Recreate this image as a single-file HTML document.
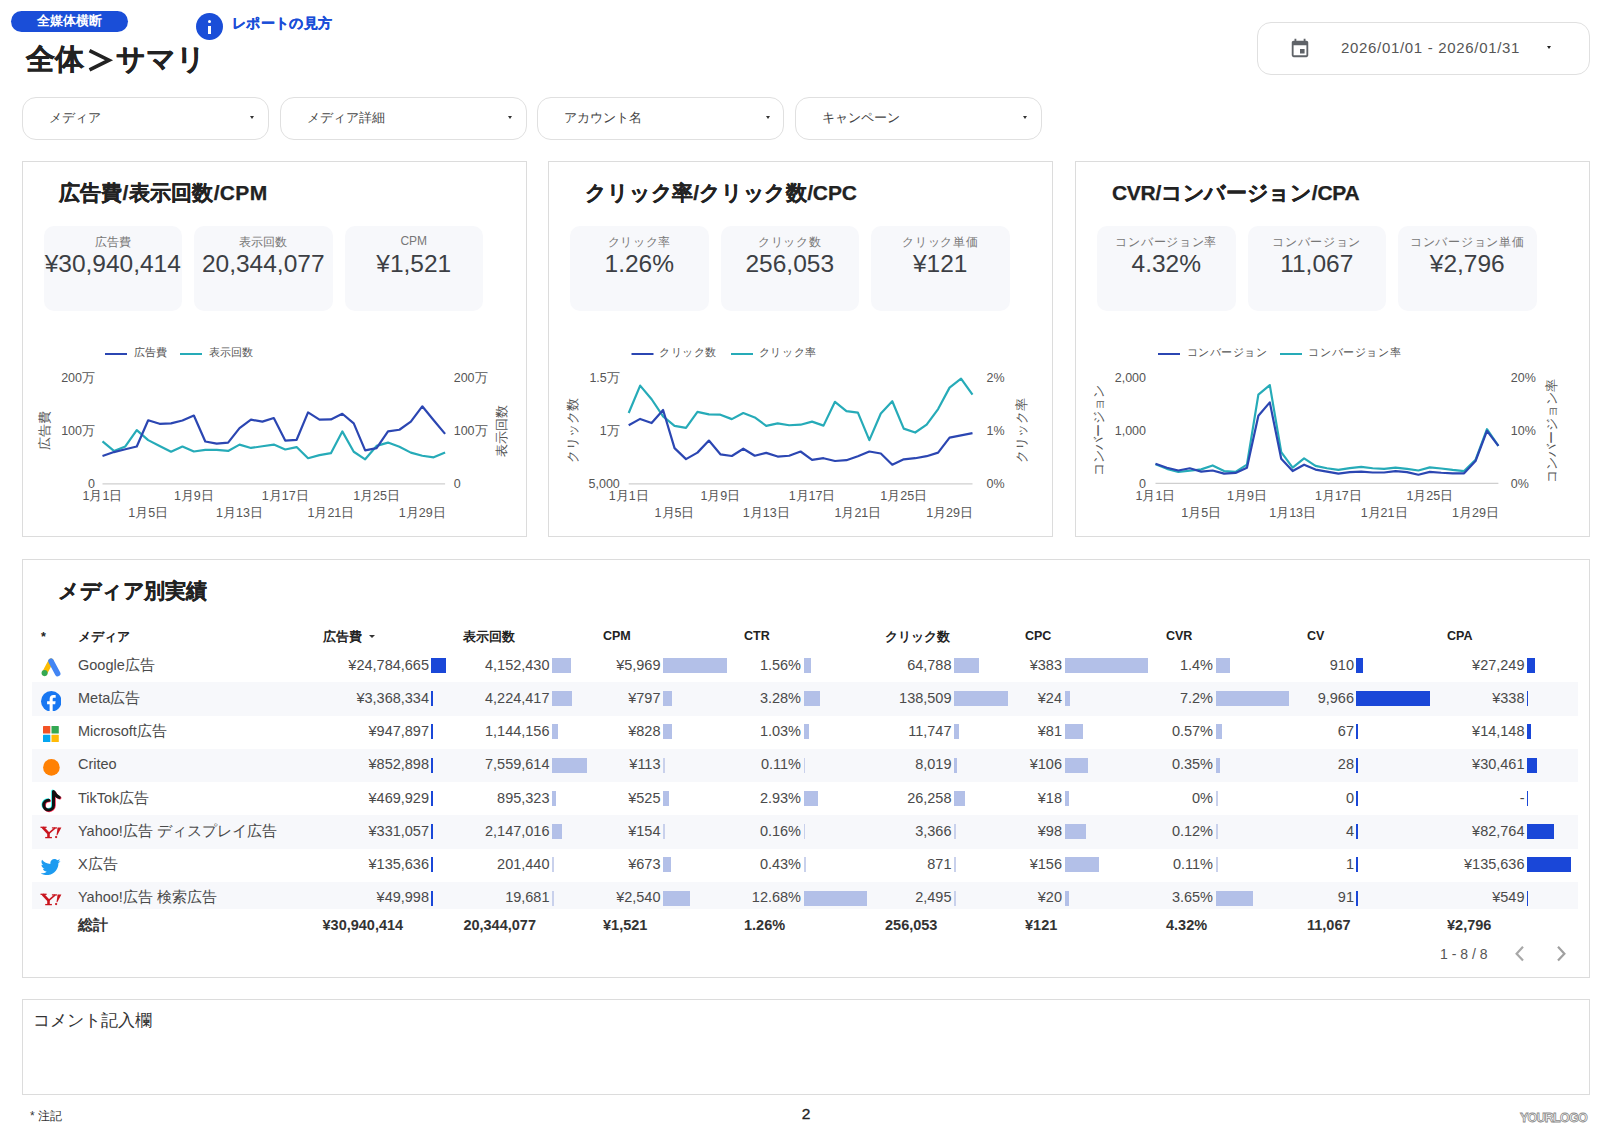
<!DOCTYPE html><html><head><meta charset="utf-8"><style>
*{box-sizing:border-box;margin:0;padding:0}
html,body{width:1612px;height:1139px;overflow:hidden;background:#fff;font-family:"Liberation Sans", sans-serif;color:#333}
.a{position:absolute;white-space:nowrap}
.pill{position:absolute;border:1.4px solid #e0e0e0;border-radius:14px;background:#fff}
.panel{position:absolute;border:1px solid #dcdcdc;background:#fff}
.card{position:absolute;background:#f7f8fb;border-radius:10px}
.klab{position:absolute;left:0;right:0;text-align:center;font-size:12px;color:#777;top:8px}
.kval{position:absolute;left:0;right:0;text-align:center;font-size:24.5px;color:#3c3f44;top:24px}
.caret{position:absolute;width:0;height:0;border-left:2.8px solid transparent;border-right:2.8px solid transparent;border-top:3.4px solid #333}
.ax{font-size:12.5px;fill:#555}
.lg{font-size:11.3px;fill:#555}
.th{font-size:12.5px;font-weight:bold;color:#222}
.td{font-size:14.5px;color:#4a4a4a;line-height:18px}
.tt{font-size:14.5px;font-weight:bold;color:#333;line-height:18px}
.ptitle{position:absolute;font-size:21px;font-weight:bold;color:#222;-webkit-text-stroke:0.25px #222}
</style></head><body>

<div class="a" style="left:11px;top:11px;width:117px;height:21px;border-radius:11px;background:#1a4ed8;color:#fff;font-size:12.5px;font-weight:bold;text-align:center;line-height:21px;">全媒体横断</div>
<div class="a" style="left:196px;top:13px;width:27px;height:27px;border-radius:50%;background:#1a4ed8"></div>
<div class="a" style="left:207.7px;top:19.8px;width:3.6px;height:3.6px;border-radius:50%;background:#fff"></div>
<div class="a" style="left:207.9px;top:25.8px;width:3.2px;height:7.8px;background:#fff"></div>
<div class="a" style="left:232px;top:15px;font-size:14px;font-weight:bold;color:#1a4ed8;letter-spacing:0.35px;-webkit-text-stroke:0.3px #1a4ed8">レポートの見方</div>
<div class="a" style="left:26px;top:40px;font-size:29px;font-weight:bold;color:#222;-webkit-text-stroke:0.3px #222">全体</div>
<svg class="a" style="left:86px;top:47px" width="28" height="28" viewBox="0 0 28 28"><path d="M3.5 3.6 L23 13.2 L3.5 22.8" fill="none" stroke="#222" stroke-width="3.6" stroke-linejoin="miter"/></svg>
<div class="a" style="left:116px;top:40px;font-size:29px;font-weight:bold;color:#222;-webkit-text-stroke:0.3px #222">サマリ</div>
<div class="pill" style="left:1257px;top:22px;width:333px;height:53px;border-radius:14px"></div>
<svg class="a" style="left:1289px;top:37px" width="22" height="22" viewBox="0 0 24 24"><path fill="#5f6368" d="M19 4h-1V2h-2v2H8V2H6v2H5c-1.11 0-1.99.9-1.99 2L3 20a2 2 0 0 0 2 2h14c1.1 0 2-.9 2-2V6c0-1.1-.9-2-2-2zm0 16H5V9h14v11zm-2-7h-5v5h5v-5z"/></svg>
<div class="a" style="left:1341px;top:38.5px;font-size:15px;color:#555;letter-spacing:0.68px">2026/01/01 - 2026/01/31</div>
<div class="caret" style="left:1547px;top:46px;border-top-color:#222"></div>
<div class="pill" style="left:21.5px;top:97px;width:247px;height:43px"></div>
<div class="a" style="left:48.5px;top:109px;font-size:13px;color:#444">メディア</div>
<div class="caret" style="left:249.7px;top:116px"></div>
<div class="pill" style="left:279.6px;top:97px;width:247px;height:43px"></div>
<div class="a" style="left:306.6px;top:109px;font-size:13px;color:#444">メディア詳細</div>
<div class="caret" style="left:507.8px;top:116px"></div>
<div class="pill" style="left:537.4px;top:97px;width:247px;height:43px"></div>
<div class="a" style="left:564.4px;top:109px;font-size:13px;color:#444">アカウント名</div>
<div class="caret" style="left:765.5999999999999px;top:116px"></div>
<div class="pill" style="left:795.1px;top:97px;width:247px;height:43px"></div>
<div class="a" style="left:822.1px;top:109px;font-size:13px;color:#444">キャンペーン</div>
<div class="caret" style="left:1023.3px;top:116px"></div>
<div class="panel" style="left:21.5px;top:161px;width:505px;height:376px"></div>
<div class="ptitle" style="left:58.5px;top:179px;letter-spacing:0.3px">広告費/表示回数/CPM</div>
<div class="card" style="left:43.5px;top:225.5px;width:138.5px;height:85.5px"><div class="klab" style="letter-spacing:0px">広告費</div><div class="kval">¥30,940,414</div></div>
<div class="card" style="left:194.0px;top:225.5px;width:138.5px;height:85.5px"><div class="klab" style="letter-spacing:0px">表示回数</div><div class="kval">20,344,077</div></div>
<div class="card" style="left:344.5px;top:225.5px;width:138.5px;height:85.5px"><div class="klab" style="letter-spacing:0px">CPM</div><div class="kval">¥1,521</div></div>
<div class="panel" style="left:548px;top:161px;width:505px;height:376px"></div>
<div class="ptitle" style="left:585px;top:179px;letter-spacing:-0.15px">クリック率/クリック数/CPC</div>
<div class="card" style="left:570.0px;top:225.5px;width:138.5px;height:85.5px"><div class="klab" style="letter-spacing:0.7px">クリック率</div><div class="kval">1.26%</div></div>
<div class="card" style="left:720.5px;top:225.5px;width:138.5px;height:85.5px"><div class="klab" style="letter-spacing:0.7px">クリック数</div><div class="kval">256,053</div></div>
<div class="card" style="left:871.0px;top:225.5px;width:138.5px;height:85.5px"><div class="klab" style="letter-spacing:0.7px">クリック単価</div><div class="kval">¥121</div></div>
<div class="panel" style="left:1075px;top:161px;width:515px;height:376px"></div>
<div class="ptitle" style="left:1112px;top:179px;letter-spacing:-0.3px">CVR/コンバージョン/CPA</div>
<div class="card" style="left:1097.0px;top:225.5px;width:138.5px;height:85.5px"><div class="klab" style="letter-spacing:0.7px">コンバージョン率</div><div class="kval">4.32%</div></div>
<div class="card" style="left:1247.5px;top:225.5px;width:138.5px;height:85.5px"><div class="klab" style="letter-spacing:0.7px">コンバージョン</div><div class="kval">11,067</div></div>
<div class="card" style="left:1398.0px;top:225.5px;width:138.5px;height:85.5px"><div class="klab" style="letter-spacing:0.7px">コンバージョン単価</div><div class="kval">¥2,796</div></div>
<div class="panel" style="left:21.5px;top:558.5px;width:1568px;height:419px"></div>
<div class="ptitle" style="left:58px;top:576.5px;letter-spacing:-0.4px">メディア別実績</div>
<div class="panel" style="left:21.5px;top:999px;width:1568px;height:96px"></div>
<div class="a" style="left:33px;top:1010px;font-size:16.5px;color:#333">コメント記入欄</div>
<div class="a" style="left:30px;top:1108px;font-size:12px;color:#333">* 注記</div>
<div class="a" style="left:801.8px;top:1105.3px;font-size:15.5px;color:#222;-webkit-text-stroke:0.3px #222">2</div>
<div class="a" style="left:1520px;top:1111px;font-size:12.5px;font-weight:bold;color:#fff;-webkit-text-stroke:0.8px #8a8a8a;letter-spacing:-0.75px">YOURLOGO</div>
<svg class="a" style="left:0;top:0" width="1612" height="1139"><line x1="102.5" y1="483.9" x2="445.1" y2="483.9" stroke="#cfcfcf" stroke-width="1.3"/>
<polyline points="102.50,441.46 113.92,450.96 125.34,446.49 136.76,430.07 148.18,440.12 159.60,445.93 171.02,451.74 182.44,446.49 193.86,451.51 205.28,449.84 216.70,449.84 228.12,450.96 239.54,444.59 250.96,447.94 262.38,446.27 273.80,444.59 285.22,449.5 296.64,447.05 308.06,458.21 319.48,455.09 330.90,453.19 342.32,431.41 353.74,451.74 365.16,459.33 376.58,445.93 388.00,442.58 399.42,446.82 410.84,452.63 422.26,455.76 433.68,457.32 445.10,452.41" fill="none" stroke="#26abb8" stroke-width="2.2" stroke-linejoin="round"/>
<polyline points="102.50,455.98 113.92,452.07 125.34,449.28 136.76,446.49 148.18,420.25 159.60,423.82 171.02,423.37 182.44,420.47 193.86,415.56 205.28,441.46 216.70,443.7 228.12,442.58 239.54,428.06 250.96,419.69 262.38,421.59 273.80,418.01 285.22,440.57 296.64,439.79 308.06,412.43 319.48,419.69 330.90,419.47 342.32,413.77 353.74,423.37 365.16,450.4 376.58,448.16 388.00,431.41 399.42,429.74 410.84,421.59 422.26,406.29 433.68,420.25 445.10,433.87" fill="none" stroke="#2b46b2" stroke-width="2.2" stroke-linejoin="round"/>
<text x="95" y="381.5" text-anchor="end" class="ax">200万</text>
<text x="95" y="434.5" text-anchor="end" class="ax">100万</text>
<text x="95" y="487.9" text-anchor="end" class="ax">0</text>
<text x="453.7" y="381.5" text-anchor="start" class="ax">200万</text>
<text x="453.7" y="434.5" text-anchor="start" class="ax">100万</text>
<text x="453.7" y="487.9" text-anchor="start" class="ax">0</text>
<text x="0" y="0" text-anchor="middle" class="ax" transform="translate(49.1,430.5) rotate(-90)">広告費</text>
<text x="0" y="0" text-anchor="middle" class="ax" transform="translate(506.4,430.5) rotate(-90)">表示回数</text>
<text x="102.50" y="499.5" text-anchor="middle" class="ax">1月1日</text>
<text x="193.86" y="499.5" text-anchor="middle" class="ax">1月9日</text>
<text x="285.22" y="499.5" text-anchor="middle" class="ax">1月17日</text>
<text x="376.58" y="499.5" text-anchor="middle" class="ax">1月25日</text>
<text x="148.18" y="516.5" text-anchor="middle" class="ax">1月5日</text>
<text x="239.54" y="516.5" text-anchor="middle" class="ax">1月13日</text>
<text x="330.90" y="516.5" text-anchor="middle" class="ax">1月21日</text>
<text x="422.26" y="516.5" text-anchor="middle" class="ax">1月29日</text>
<line x1="105" y1="354" x2="127" y2="354" stroke="#2b46b2" stroke-width="2"/>
<text x="133.5" y="355.8" class="lg" letter-spacing="0">広告費</text>
<line x1="180" y1="354" x2="202" y2="354" stroke="#26abb8" stroke-width="2"/>
<text x="209" y="355.8" class="lg" letter-spacing="0">表示回数</text>
<line x1="628.7" y1="483.9" x2="972.5" y2="483.9" stroke="#cfcfcf" stroke-width="1.3"/>
<polyline points="628.70,412.99 640.16,385.63 651.62,399.26 663.08,416.34 674.54,425.83 686.00,427.84 697.46,411.87 708.92,414.44 720.38,414.67 731.84,419.13 743.30,412.99 754.76,417.46 766.22,425.83 777.68,423.37 789.14,425.27 800.60,424.71 812.06,421.59 823.52,425.61 834.98,401.82 846.44,411.09 857.90,412.66 869.36,440.12 880.82,413.55 892.28,401.27 903.74,428.62 915.20,432.53 926.66,424.71 938.12,409.08 949.58,387.64 961.04,378.71 972.50,394.57" fill="none" stroke="#26abb8" stroke-width="2.2" stroke-linejoin="round"/>
<polyline points="628.70,425.27 640.16,418.91 651.62,423.04 663.08,409.98 674.54,448.16 686.00,459.11 697.46,452.63 708.92,440.57 720.38,454.31 731.84,455.98 743.30,448.72 754.76,455.76 766.22,452.85 777.68,456.54 789.14,455.76 800.60,451.51 812.06,459.89 823.52,458.21 834.98,461.0 846.44,460.22 857.90,456.2 869.36,451.51 880.82,453.52 892.28,464.69 903.74,459.33 915.20,458.21 926.66,456.2 938.12,452.63 949.58,437.56 961.04,435.32 972.50,433.09" fill="none" stroke="#2b46b2" stroke-width="2.2" stroke-linejoin="round"/>
<text x="619.8" y="381.5" text-anchor="end" class="ax">1.5万</text>
<text x="619.8" y="434.5" text-anchor="end" class="ax">1万</text>
<text x="619.8" y="487.9" text-anchor="end" class="ax">5,000</text>
<text x="986.6" y="381.5" text-anchor="start" class="ax">2%</text>
<text x="986.6" y="434.5" text-anchor="start" class="ax">1%</text>
<text x="986.6" y="487.9" text-anchor="start" class="ax">0%</text>
<text x="0" y="0" text-anchor="middle" class="ax" transform="translate(576.9,430.5) rotate(-90)">クリック数</text>
<text x="0" y="0" text-anchor="middle" class="ax" transform="translate(1025.9,430.5) rotate(-90)">クリック率</text>
<text x="628.70" y="499.5" text-anchor="middle" class="ax">1月1日</text>
<text x="720.38" y="499.5" text-anchor="middle" class="ax">1月9日</text>
<text x="812.06" y="499.5" text-anchor="middle" class="ax">1月17日</text>
<text x="903.74" y="499.5" text-anchor="middle" class="ax">1月25日</text>
<text x="674.54" y="516.5" text-anchor="middle" class="ax">1月5日</text>
<text x="766.22" y="516.5" text-anchor="middle" class="ax">1月13日</text>
<text x="857.90" y="516.5" text-anchor="middle" class="ax">1月21日</text>
<text x="949.58" y="516.5" text-anchor="middle" class="ax">1月29日</text>
<line x1="631.5" y1="354" x2="653.5" y2="354" stroke="#2b46b2" stroke-width="2"/>
<text x="659" y="355.8" class="lg" letter-spacing="0.6">クリック数</text>
<line x1="731" y1="354" x2="753" y2="354" stroke="#26abb8" stroke-width="2"/>
<text x="758.8" y="355.8" class="lg" letter-spacing="0.6">クリック率</text>
<line x1="1155.5" y1="483.4" x2="1498.4" y2="483.4" stroke="#cfcfcf" stroke-width="1.3"/>
<polyline points="1155.50,464.35 1166.93,468.82 1178.36,471.84 1189.79,470.72 1201.22,469.38 1212.65,465.47 1224.08,471.05 1235.51,471.84 1246.94,464.69 1258.37,394.57 1269.80,385.07 1281.23,452.07 1292.66,467.7 1304.09,458.44 1315.52,465.81 1326.95,468.26 1338.38,469.94 1349.81,468.04 1361.24,466.92 1372.67,468.26 1384.10,468.82 1395.53,467.7 1406.96,468.82 1418.39,470.5 1429.82,467.37 1441.25,468.49 1452.68,469.94 1464.11,471.05 1475.54,459.89 1486.97,429.18 1498.40,445.93" fill="none" stroke="#26abb8" stroke-width="2.2" stroke-linejoin="round"/>
<polyline points="1155.50,463.8 1166.93,467.7 1178.36,470.5 1189.79,468.26 1201.22,471.61 1212.65,470.5 1224.08,473.62 1235.51,472.95 1246.94,467.7 1258.37,415.78 1269.80,402.38 1281.23,458.77 1292.66,471.05 1304.09,464.69 1315.52,469.6 1326.95,471.61 1338.38,473.62 1349.81,472.17 1361.24,471.61 1372.67,472.51 1384.10,472.51 1395.53,471.05 1406.96,472.17 1418.39,474.74 1429.82,471.84 1441.25,472.73 1452.68,473.29 1464.11,473.29 1475.54,461.0 1486.97,430.86 1498.40,445.93" fill="none" stroke="#2b46b2" stroke-width="2.2" stroke-linejoin="round"/>
<text x="1146" y="381.5" text-anchor="end" class="ax">2,000</text>
<text x="1146" y="434.5" text-anchor="end" class="ax">1,000</text>
<text x="1146" y="487.9" text-anchor="end" class="ax">0</text>
<text x="1510.8" y="381.5" text-anchor="start" class="ax">20%</text>
<text x="1510.8" y="434.5" text-anchor="start" class="ax">10%</text>
<text x="1510.8" y="487.9" text-anchor="start" class="ax">0%</text>
<text x="0" y="0" text-anchor="middle" class="ax" transform="translate(1103.3,430.5) rotate(-90)">コンバージョン</text>
<text x="0" y="0" text-anchor="middle" class="ax" transform="translate(1555.5,430.5) rotate(-90)">コンバージョン率</text>
<text x="1155.50" y="499.5" text-anchor="middle" class="ax">1月1日</text>
<text x="1246.94" y="499.5" text-anchor="middle" class="ax">1月9日</text>
<text x="1338.38" y="499.5" text-anchor="middle" class="ax">1月17日</text>
<text x="1429.82" y="499.5" text-anchor="middle" class="ax">1月25日</text>
<text x="1201.22" y="516.5" text-anchor="middle" class="ax">1月5日</text>
<text x="1292.66" y="516.5" text-anchor="middle" class="ax">1月13日</text>
<text x="1384.10" y="516.5" text-anchor="middle" class="ax">1月21日</text>
<text x="1475.54" y="516.5" text-anchor="middle" class="ax">1月29日</text>
<line x1="1158" y1="354" x2="1180" y2="354" stroke="#2b46b2" stroke-width="2"/>
<text x="1186.5" y="355.8" class="lg" letter-spacing="0.6">コンバージョン</text>
<line x1="1280" y1="354" x2="1302" y2="354" stroke="#26abb8" stroke-width="2"/>
<text x="1308.4" y="355.8" class="lg" letter-spacing="0.6">コンバージョン率</text></svg>
<div class="a th" style="left:41px;top:629.5px">*</div>
<div class="a th" style="left:78px;top:628.5px">メディア</div>
<div class="a th" style="left:322.5px;top:628.5px">広告費</div>
<div class="a th" style="left:463.4px;top:628.5px">表示回数</div>
<div class="a th" style="left:603px;top:628.5px">CPM</div>
<div class="a th" style="left:744px;top:628.5px">CTR</div>
<div class="a th" style="left:885px;top:628.5px">クリック数</div>
<div class="a th" style="left:1025px;top:628.5px">CPC</div>
<div class="a th" style="left:1166px;top:628.5px">CVR</div>
<div class="a th" style="left:1307px;top:628.5px">CV</div>
<div class="a th" style="left:1447px;top:628.5px">CPA</div>
<div class="caret" style="left:368.5px;top:635.0px;border-left-width:3px;border-right-width:3px;border-top-width:3.5px"></div>
<svg class="a" style="left:38px;top:652px" width="28" height="28"><path d="M6.6 21 L13 9.1" stroke="#fbbc04" stroke-width="5.3" stroke-linecap="round"/><path d="M13 9.1 L19.7 21.6" stroke="#4285f4" stroke-width="5.5" stroke-linecap="round"/><circle cx="6.6" cy="21.1" r="3.05" fill="#34a853"/></svg>
<div class="a td" style="left:78px;top:655.60px">Google広告</div>
<div class="a td" style="right:1183px;top:655.60px">¥24,784,665</div>
<div class="a" style="left:431.2px;top:657.70px;width:15.00px;height:15px;background:#1a47d8"></div>
<div class="a td" style="right:1062.5px;top:655.60px">4,152,430</div>
<div class="a" style="left:552.4px;top:657.70px;width:19.01px;height:15px;background:#b3c0e8"></div>
<div class="a td" style="right:951.5px;top:655.60px">¥5,969</div>
<div class="a" style="left:663.4px;top:657.70px;width:63.60px;height:15px;background:#b3c0e8"></div>
<div class="a td" style="right:811px;top:655.60px">1.56%</div>
<div class="a" style="left:803.5px;top:657.70px;width:7.81px;height:15px;background:#b3c0e8"></div>
<div class="a td" style="right:660.5px;top:655.60px">64,788</div>
<div class="a" style="left:954.4px;top:657.70px;width:25.02px;height:15px;background:#b3c0e8"></div>
<div class="a td" style="right:550px;top:655.60px">¥383</div>
<div class="a" style="left:1065px;top:657.70px;width:83.00px;height:15px;background:#b3c0e8"></div>
<div class="a td" style="right:399px;top:655.60px">1.4%</div>
<div class="a" style="left:1216px;top:657.70px;width:14.25px;height:15px;background:#b3c0e8"></div>
<div class="a td" style="right:258px;top:655.60px">910</div>
<div class="a" style="left:1356px;top:657.70px;width:6.79px;height:15px;background:#1a47d8"></div>
<div class="a td" style="right:87.5px;top:655.60px">¥27,249</div>
<div class="a" style="left:1526.6px;top:657.70px;width:8.88px;height:15px;background:#1a47d8"></div>
<div class="a" style="left:32px;top:682.27px;width:1546px;height:33.27px;background:#f7f8fb"></div>
<svg class="a" style="left:40.6px;top:690.5px" width="20.6" height="20.6" viewBox="0 0 24 24"><circle cx="12" cy="12" r="12" fill="#1877f2"/><path fill="#fff" d="M13.6 24V15.3h2.95l.45-3.45H13.6V9.65c0-1 .28-1.68 1.7-1.68h1.82V4.9c-.32-.04-1.4-.13-2.65-.13-2.62 0-4.42 1.6-4.42 4.54v2.54H7.1v3.45h2.95V24z"/></svg>
<div class="a td" style="left:78px;top:688.87px">Meta広告</div>
<div class="a td" style="right:1183px;top:688.87px">¥3,368,334</div>
<div class="a" style="left:431.2px;top:690.97px;width:2.04px;height:15px;background:#1a47d8"></div>
<div class="a td" style="right:1062.5px;top:688.87px">4,224,417</div>
<div class="a" style="left:552.4px;top:690.97px;width:19.33px;height:15px;background:#b3c0e8"></div>
<div class="a td" style="right:951.5px;top:688.87px">¥797</div>
<div class="a" style="left:663.4px;top:690.97px;width:8.49px;height:15px;background:#b3c0e8"></div>
<div class="a td" style="right:811px;top:688.87px">3.28%</div>
<div class="a" style="left:803.5px;top:690.97px;width:16.43px;height:15px;background:#b3c0e8"></div>
<div class="a td" style="right:660.5px;top:688.87px">138,509</div>
<div class="a" style="left:954.4px;top:690.97px;width:53.50px;height:15px;background:#b3c0e8"></div>
<div class="a td" style="right:550px;top:688.87px">¥24</div>
<div class="a" style="left:1065px;top:690.97px;width:5.20px;height:15px;background:#b3c0e8"></div>
<div class="a td" style="right:399px;top:688.87px">7.2%</div>
<div class="a" style="left:1216px;top:690.97px;width:73.30px;height:15px;background:#b3c0e8"></div>
<div class="a td" style="right:258px;top:688.87px">9,966</div>
<div class="a" style="left:1356px;top:690.97px;width:74.40px;height:15px;background:#1a47d8"></div>
<div class="a td" style="right:87.5px;top:688.87px">¥338</div>
<div class="a" style="left:1526.6px;top:690.97px;width:1.60px;height:15px;background:#1a47d8"></div>
<svg class="a" style="left:43.2px;top:726px" width="16" height="16.4" viewBox="0 0 16 16.4"><rect x="0" y="0" width="7.3" height="7.5" rx="0.6" fill="#f35325"/><rect x="8.5" y="0" width="7.3" height="7.5" rx="0.6" fill="#34a853"/><rect x="0" y="8.8" width="7.3" height="7.5" rx="0.6" fill="#05a6f0"/><rect x="8.5" y="8.8" width="7.3" height="7.5" rx="0.6" fill="#ffba08"/></svg>
<div class="a td" style="left:78px;top:722.14px">Microsoft広告</div>
<div class="a td" style="right:1183px;top:722.14px">¥947,897</div>
<div class="a" style="left:431.2px;top:724.24px;width:1.60px;height:15px;background:#1a47d8"></div>
<div class="a td" style="right:1062.5px;top:722.14px">1,144,156</div>
<div class="a" style="left:552.4px;top:724.24px;width:5.24px;height:15px;background:#b3c0e8"></div>
<div class="a td" style="right:951.5px;top:722.14px">¥828</div>
<div class="a" style="left:663.4px;top:724.24px;width:8.82px;height:15px;background:#b3c0e8"></div>
<div class="a td" style="right:811px;top:722.14px">1.03%</div>
<div class="a" style="left:803.5px;top:724.24px;width:5.16px;height:15px;background:#b3c0e8"></div>
<div class="a td" style="right:660.5px;top:722.14px">11,747</div>
<div class="a" style="left:954.4px;top:724.24px;width:4.54px;height:15px;background:#b3c0e8"></div>
<div class="a td" style="right:550px;top:722.14px">¥81</div>
<div class="a" style="left:1065px;top:724.24px;width:17.55px;height:15px;background:#b3c0e8"></div>
<div class="a td" style="right:399px;top:722.14px">0.57%</div>
<div class="a" style="left:1216px;top:724.24px;width:5.80px;height:15px;background:#b3c0e8"></div>
<div class="a td" style="right:258px;top:722.14px">67</div>
<div class="a" style="left:1356px;top:724.24px;width:1.60px;height:15px;background:#1a47d8"></div>
<div class="a td" style="right:87.5px;top:722.14px">¥14,148</div>
<div class="a" style="left:1526.6px;top:724.24px;width:4.61px;height:15px;background:#1a47d8"></div>
<div class="a" style="left:32px;top:748.81px;width:1546px;height:33.27px;background:#f7f8fb"></div>
<svg class="a" style="left:42.5px;top:758.6px" width="17" height="17"><circle cx="8.4" cy="8.4" r="8.3" fill="#ff8104"/></svg>
<div class="a td" style="left:78px;top:755.41px">Criteo</div>
<div class="a td" style="right:1183px;top:755.41px">¥852,898</div>
<div class="a" style="left:431.2px;top:757.51px;width:1.60px;height:15px;background:#1a47d8"></div>
<div class="a td" style="right:1062.5px;top:755.41px">7,559,614</div>
<div class="a" style="left:552.4px;top:757.51px;width:34.60px;height:15px;background:#b3c0e8"></div>
<div class="a td" style="right:951.5px;top:755.41px">¥113</div>
<div class="a" style="left:663.4px;top:757.51px;width:1.60px;height:15px;background:#c9d1ec"></div>
<div class="a td" style="right:811px;top:755.41px">0.11%</div>
<div class="a" style="left:803.5px;top:757.51px;width:1.60px;height:15px;background:#c9d1ec"></div>
<div class="a td" style="right:660.5px;top:755.41px">8,019</div>
<div class="a" style="left:954.4px;top:757.51px;width:3.10px;height:15px;background:#b3c0e8"></div>
<div class="a td" style="right:550px;top:755.41px">¥106</div>
<div class="a" style="left:1065px;top:757.51px;width:22.97px;height:15px;background:#b3c0e8"></div>
<div class="a td" style="right:399px;top:755.41px">0.35%</div>
<div class="a" style="left:1216px;top:757.51px;width:3.56px;height:15px;background:#b3c0e8"></div>
<div class="a td" style="right:258px;top:755.41px">28</div>
<div class="a" style="left:1356px;top:757.51px;width:1.60px;height:15px;background:#1a47d8"></div>
<div class="a td" style="right:87.5px;top:755.41px">¥30,461</div>
<div class="a" style="left:1526.6px;top:757.51px;width:9.93px;height:15px;background:#1a47d8"></div>
<svg class="a" style="left:38px;top:786px" width="28" height="28"><path d="M15.5 5.6 V19.2 A4.9 4.9 0 1 1 10.7 14.2 M16.2 6.4 Q17.6 10 21.2 11.4" fill="none" stroke="#25f4ee" stroke-width="3.1" stroke-linecap="round" transform="translate(-0.7,-0.5)"/><path d="M15.5 5.6 V19.2 A4.9 4.9 0 1 1 10.7 14.2 M16.2 6.4 Q17.6 10 21.2 11.4" fill="none" stroke="#fe2c55" stroke-width="3.1" stroke-linecap="round" transform="translate(0.7,0.6)"/><path d="M15.5 5.6 V19.2 A4.9 4.9 0 1 1 10.7 14.2 M16.2 6.4 Q17.6 10 21.2 11.4" fill="none" stroke="#111" stroke-width="3.1" stroke-linecap="round" transform="translate(0,0)"/></svg>
<div class="a td" style="left:78px;top:788.68px">TikTok広告</div>
<div class="a td" style="right:1183px;top:788.68px">¥469,929</div>
<div class="a" style="left:431.2px;top:790.78px;width:1.60px;height:15px;background:#1a47d8"></div>
<div class="a td" style="right:1062.5px;top:788.68px">895,323</div>
<div class="a" style="left:552.4px;top:790.78px;width:4.10px;height:15px;background:#b3c0e8"></div>
<div class="a td" style="right:951.5px;top:788.68px">¥525</div>
<div class="a" style="left:663.4px;top:790.78px;width:5.59px;height:15px;background:#b3c0e8"></div>
<div class="a td" style="right:811px;top:788.68px">2.93%</div>
<div class="a" style="left:803.5px;top:790.78px;width:14.67px;height:15px;background:#b3c0e8"></div>
<div class="a td" style="right:660.5px;top:788.68px">26,258</div>
<div class="a" style="left:954.4px;top:790.78px;width:10.14px;height:15px;background:#b3c0e8"></div>
<div class="a td" style="right:550px;top:788.68px">¥18</div>
<div class="a" style="left:1065px;top:790.78px;width:3.90px;height:15px;background:#b3c0e8"></div>
<div class="a td" style="right:399px;top:788.68px">0%</div>
<div class="a" style="left:1216px;top:790.78px;width:1.60px;height:15px;background:#c9d1ec"></div>
<div class="a td" style="right:258px;top:788.68px">0</div>
<div class="a" style="left:1356px;top:790.78px;width:1.60px;height:15px;background:#1a47d8"></div>
<div class="a td" style="right:87.5px;top:788.68px">-</div>
<div class="a" style="left:1526.6px;top:790.78px;width:1.60px;height:15px;background:#1a47d8"></div>
<div class="a" style="left:32px;top:815.35px;width:1546px;height:33.27px;background:#f7f8fb"></div>
<svg class="a" style="left:36px;top:818px" width="30" height="30"><g stroke="#c9151e" fill="none"><path d="M6.8 9.4 L12.4 15.4" stroke-width="2.7"/><path d="M19.2 9.9 L12.8 15.4" stroke-width="1.5"/><path d="M12.5 15 V19.4" stroke-width="2.6"/><path d="M4.5 9.3 H10.6" stroke-width="1.3"/><path d="M15.9 9.9 H21" stroke-width="1.2"/><path d="M9.2 19.6 H15.9" stroke-width="1.3"/></g><path d="M21.6 9.6 L25.4 9.6 L21.3 17.3 L20.5 17.3 Z" fill="#c9151e"/><circle cx="20.1" cy="19.1" r="1.15" fill="#c9151e"/></svg>
<div class="a td" style="left:78px;top:821.95px">Yahoo!広告 ディスプレイ広告</div>
<div class="a td" style="right:1183px;top:821.95px">¥331,057</div>
<div class="a" style="left:431.2px;top:824.05px;width:1.60px;height:15px;background:#1a47d8"></div>
<div class="a td" style="right:1062.5px;top:821.95px">2,147,016</div>
<div class="a" style="left:552.4px;top:824.05px;width:9.83px;height:15px;background:#b3c0e8"></div>
<div class="a td" style="right:951.5px;top:821.95px">¥154</div>
<div class="a" style="left:663.4px;top:824.05px;width:1.64px;height:15px;background:#c9d1ec"></div>
<div class="a td" style="right:811px;top:821.95px">0.16%</div>
<div class="a" style="left:803.5px;top:824.05px;width:1.60px;height:15px;background:#c9d1ec"></div>
<div class="a td" style="right:660.5px;top:821.95px">3,366</div>
<div class="a" style="left:954.4px;top:824.05px;width:1.60px;height:15px;background:#c9d1ec"></div>
<div class="a td" style="right:550px;top:821.95px">¥98</div>
<div class="a" style="left:1065px;top:824.05px;width:21.24px;height:15px;background:#b3c0e8"></div>
<div class="a td" style="right:399px;top:821.95px">0.12%</div>
<div class="a" style="left:1216px;top:824.05px;width:1.60px;height:15px;background:#c9d1ec"></div>
<div class="a td" style="right:258px;top:821.95px">4</div>
<div class="a" style="left:1356px;top:824.05px;width:1.60px;height:15px;background:#1a47d8"></div>
<div class="a td" style="right:87.5px;top:821.95px">¥82,764</div>
<div class="a" style="left:1526.6px;top:824.05px;width:26.97px;height:15px;background:#1a47d8"></div>
<svg class="a" style="left:40.8px;top:858.5px" width="19.8" height="16.2" viewBox="0 0 24 19.6"><path fill="#1d9bf0" d="M23.6 2.3c-.9.4-1.8.6-2.8.8 1-.6 1.8-1.6 2.1-2.7-.9.6-2 1-3.1 1.2C18.9.6 17.6 0 16.2 0c-2.7 0-4.9 2.2-4.9 4.9 0 .4 0 .8.1 1.1C7.3 5.8 3.7 3.9 1.3.9.9 1.6.6 2.5.6 3.4c0 1.7.9 3.2 2.2 4.1-.8 0-1.6-.2-2.2-.6V7c0 2.4 1.7 4.4 3.9 4.8-.4.1-.8.2-1.3.2-.3 0-.6 0-.9-.1.6 2 2.4 3.4 4.6 3.4-1.7 1.3-3.8 2.1-6.1 2.1-.4 0-.8 0-1.2-.1 2.2 1.4 4.8 2.2 7.5 2.2 9.1 0 14-7.5 14-14v-.6c1-.7 1.8-1.6 2.5-2.6z"/></svg>
<div class="a td" style="left:78px;top:855.22px">X広告</div>
<div class="a td" style="right:1183px;top:855.22px">¥135,636</div>
<div class="a" style="left:431.2px;top:857.32px;width:1.60px;height:15px;background:#1a47d8"></div>
<div class="a td" style="right:1062.5px;top:855.22px">201,440</div>
<div class="a" style="left:552.4px;top:857.32px;width:1.60px;height:15px;background:#c9d1ec"></div>
<div class="a td" style="right:951.5px;top:855.22px">¥673</div>
<div class="a" style="left:663.4px;top:857.32px;width:7.17px;height:15px;background:#b3c0e8"></div>
<div class="a td" style="right:811px;top:855.22px">0.43%</div>
<div class="a" style="left:803.5px;top:857.32px;width:2.15px;height:15px;background:#c9d1ec"></div>
<div class="a td" style="right:660.5px;top:855.22px">871</div>
<div class="a" style="left:954.4px;top:857.32px;width:1.60px;height:15px;background:#c9d1ec"></div>
<div class="a td" style="right:550px;top:855.22px">¥156</div>
<div class="a" style="left:1065px;top:857.32px;width:33.81px;height:15px;background:#b3c0e8"></div>
<div class="a td" style="right:399px;top:855.22px">0.11%</div>
<div class="a" style="left:1216px;top:857.32px;width:1.60px;height:15px;background:#c9d1ec"></div>
<div class="a td" style="right:258px;top:855.22px">1</div>
<div class="a" style="left:1356px;top:857.32px;width:1.60px;height:15px;background:#1a47d8"></div>
<div class="a td" style="right:87.5px;top:855.22px">¥135,636</div>
<div class="a" style="left:1526.6px;top:857.32px;width:44.20px;height:15px;background:#1a47d8"></div>
<div class="a" style="left:32px;top:881.89px;width:1546px;height:27.31px;background:#f7f8fb"></div>
<svg class="a" style="left:36px;top:884.5px" width="30" height="30"><g stroke="#c9151e" fill="none"><path d="M6.8 9.4 L12.4 15.4" stroke-width="2.7"/><path d="M19.2 9.9 L12.8 15.4" stroke-width="1.5"/><path d="M12.5 15 V19.4" stroke-width="2.6"/><path d="M4.5 9.3 H10.6" stroke-width="1.3"/><path d="M15.9 9.9 H21" stroke-width="1.2"/><path d="M9.2 19.6 H15.9" stroke-width="1.3"/></g><path d="M21.6 9.6 L25.4 9.6 L21.3 17.3 L20.5 17.3 Z" fill="#c9151e"/><circle cx="20.1" cy="19.1" r="1.15" fill="#c9151e"/></svg>
<div class="a td" style="left:78px;top:888.49px">Yahoo!広告 検索広告</div>
<div class="a td" style="right:1183px;top:888.49px">¥49,998</div>
<div class="a" style="left:431.2px;top:890.59px;width:1.60px;height:15px;background:#1a47d8"></div>
<div class="a td" style="right:1062.5px;top:888.49px">19,681</div>
<div class="a" style="left:552.4px;top:890.59px;width:1.60px;height:15px;background:#c9d1ec"></div>
<div class="a td" style="right:951.5px;top:888.49px">¥2,540</div>
<div class="a" style="left:663.4px;top:890.59px;width:27.06px;height:15px;background:#b3c0e8"></div>
<div class="a td" style="right:811px;top:888.49px">12.68%</div>
<div class="a" style="left:803.5px;top:890.59px;width:63.50px;height:15px;background:#b3c0e8"></div>
<div class="a td" style="right:660.5px;top:888.49px">2,495</div>
<div class="a" style="left:954.4px;top:890.59px;width:1.60px;height:15px;background:#c9d1ec"></div>
<div class="a td" style="right:550px;top:888.49px">¥20</div>
<div class="a" style="left:1065px;top:890.59px;width:4.33px;height:15px;background:#b3c0e8"></div>
<div class="a td" style="right:399px;top:888.49px">3.65%</div>
<div class="a" style="left:1216px;top:890.59px;width:37.16px;height:15px;background:#b3c0e8"></div>
<div class="a td" style="right:258px;top:888.49px">91</div>
<div class="a" style="left:1356px;top:890.59px;width:1.60px;height:15px;background:#1a47d8"></div>
<div class="a td" style="right:87.5px;top:888.49px">¥549</div>
<div class="a" style="left:1526.6px;top:890.59px;width:1.60px;height:15px;background:#1a47d8"></div>
<div class="a tt" style="left:78px;top:915.5px">総計</div>
<div class="a tt" style="left:322.5px;top:915.5px">¥30,940,414</div>
<div class="a tt" style="left:463.4px;top:915.5px">20,344,077</div>
<div class="a tt" style="left:603px;top:915.5px">¥1,521</div>
<div class="a tt" style="left:744px;top:915.5px">1.26%</div>
<div class="a tt" style="left:885px;top:915.5px">256,053</div>
<div class="a tt" style="left:1025px;top:915.5px">¥121</div>
<div class="a tt" style="left:1166px;top:915.5px">4.32%</div>
<div class="a tt" style="left:1307px;top:915.5px">11,067</div>
<div class="a tt" style="left:1447px;top:915.5px">¥2,796</div>
<div class="a" style="left:1440px;top:946px;font-size:14px;color:#555">1 - 8 / 8</div>
<svg class="a" style="left:1513px;top:945px" width="14" height="17" viewBox="0 0 14 17"><path d="M10 1.8 L3.6 8.7 L10 15.6" fill="none" stroke="#a8a8a8" stroke-width="2.2"/></svg>
<svg class="a" style="left:1553.5px;top:945px" width="14" height="17" viewBox="0 0 14 17"><path d="M4 1.8 L10.4 8.7 L4 15.6" fill="none" stroke="#a0a0a0" stroke-width="2.2"/></svg>
</body></html>
